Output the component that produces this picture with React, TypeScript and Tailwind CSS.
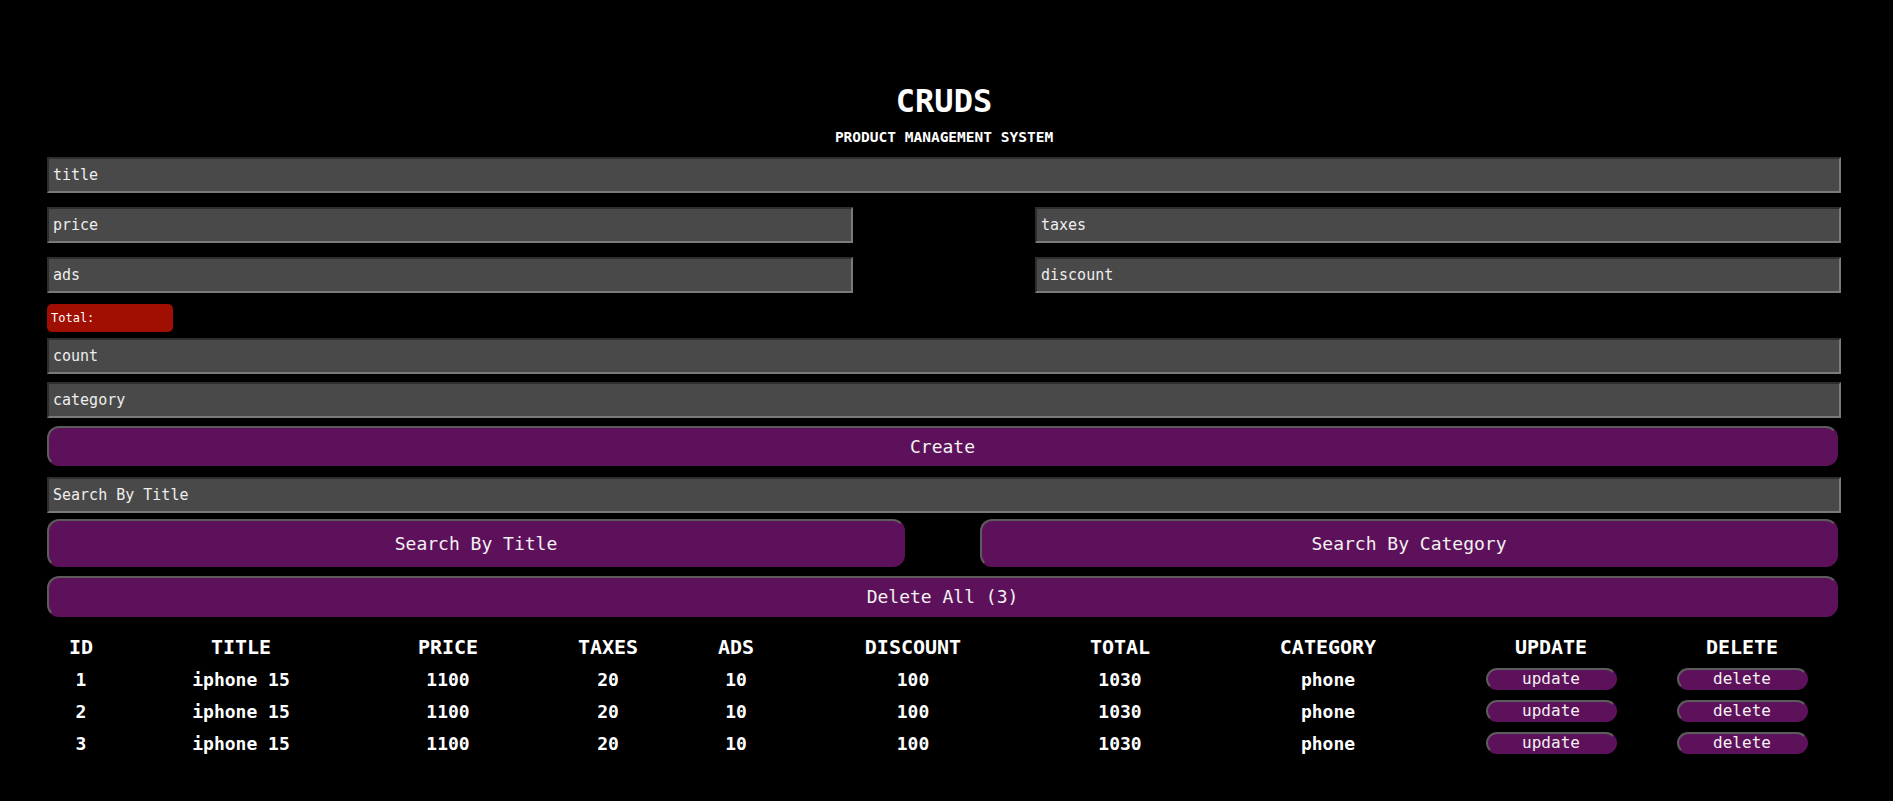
import React from 'react';

interface Product {
  id: number;
  title: string;
  price: number;
  taxes: number;
  ads: number;
  discount: number;
  total: number;
  category: string;
}

const products: Product[] = [1, 2, 3].map((id) => ({
  id,
  title: 'iphone 15',
  price: 1100,
  taxes: 20,
  ads: 10,
  discount: 100,
  total: 1030,
  category: 'phone',
}));

const inputCls =
  'h-[36px] bg-[#4a4949] border-2 border-t-[#2e2e2e] border-l-[#2e2e2e] border-b-[#7a7a7a] border-r-[#7a7a7a] px-[4px] text-[15px] text-[#eeeeee] placeholder:text-[#eeeeee] outline-none';

const btnCls =
  'bg-[#5e115b] rounded-[12px] border-2 border-t-[#5c5c5c] border-l-[#5c5c5c] border-b-transparent border-r-transparent text-[18px] text-[#f2f2f2]';

const smallBtnCls =
  'w-[131px] h-[22px] rounded-[11px] bg-[#5e115b] border-2 border-t-[#5c5c5c] border-l-[#5c5c5c] border-b-transparent border-r-transparent text-[16px] leading-[16px] font-normal text-[#f2f2f2]';

const gridCols = 'grid grid-cols-[68px_252px_162px_158px_98px_256px_158px_258px_188px_194px]';

const headers = ['ID', 'TITLE', 'PRICE', 'TAXES', 'ADS', 'DISCOUNT', 'TOTAL', 'CATEGORY', 'UPDATE', 'DELETE'];

export default function App() {
  return (
    <div className="min-h-[801px] bg-black font-['DejaVu_Sans_Mono',monospace] text-white pl-[47px] pt-[81px]">
      <div className="w-[1794px]">
        <div className="text-center">
          <h1 className="text-[32px] leading-[40px] font-bold">CRUDS</h1>
          <p className="mt-[6px] text-[14.5px] leading-[20px] font-bold">PRODUCT MANAGEMENT SYSTEM</p>
        </div>

        <div className="mt-[10px] flex flex-col">
          <input className={`${inputCls} w-full`} placeholder="title" />

          <div className="mt-[14px] flex justify-between">
            <input className={`${inputCls} w-[806px]`} placeholder="price" />
            <input className={`${inputCls} w-[806px]`} placeholder="taxes" />
          </div>
          <div className="mt-[14px] flex justify-between">
            <input className={`${inputCls} w-[806px]`} placeholder="ads" />
            <input className={`${inputCls} w-[806px]`} placeholder="discount" />
          </div>

          <div className="mt-[11px] w-[126px] h-[28px] bg-[#a10e02] rounded-[5px] flex items-center px-[4px] text-[12px]">
            Total:
          </div>

          <input className={`${inputCls} mt-[6px] w-full`} placeholder="count" />
          <input className={`${inputCls} mt-[8px] w-full`} placeholder="category" />

          <button className={`${btnCls} mt-[8px] h-[40px] w-[1791px]`}>Create</button>

          <input className={`${inputCls} mt-[11px] w-full`} placeholder="Search By Title" />

          <div className="mt-[6px] flex justify-between w-[1791px]">
            <button className={`${btnCls} h-[48px] w-[858px]`}>Search By Title</button>
            <button className={`${btnCls} h-[48px] w-[858px]`}>Search By Category</button>
          </div>

          <button className={`${btnCls} mt-[9px] h-[41px] w-[1791px]`}>Delete All (3)</button>
        </div>

        <div className="mt-[14px]">
          <div className={`${gridCols} h-[32px] items-center text-center text-[20px] font-bold`}>
            {headers.map((h) => (
              <div key={h}>{h}</div>
            ))}
          </div>
          {products.map((p) => (
            <div key={p.id} className={`${gridCols} h-[32px] items-center text-center text-[18px] font-bold`}>
              <div>{p.id}</div>
              <div>{p.title}</div>
              <div>{p.price}</div>
              <div>{p.taxes}</div>
              <div>{p.ads}</div>
              <div>{p.discount}</div>
              <div>{p.total}</div>
              <div>{p.category}</div>
              <div className="flex justify-center">
                <button className={smallBtnCls}>update</button>
              </div>
              <div className="flex justify-center">
                <button className={smallBtnCls}>delete</button>
              </div>
            </div>
          ))}
        </div>
      </div>
    </div>
  );
}
